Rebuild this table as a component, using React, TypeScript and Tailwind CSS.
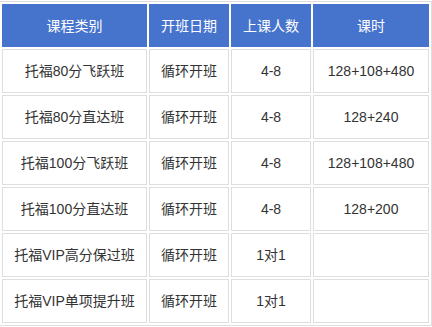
import React from "react";

const rows: [string, string, string, string][] = [
  ["托福80分飞跃班", "循环开班", "4-8", "128+108+480"],
  ["托福80分直达班", "循环开班", "4-8", "128+240"],
  ["托福100分飞跃班", "循环开班", "4-8", "128+108+480"],
  ["托福100分直达班", "循环开班", "4-8", "128+200"],
  ["托福VIP高分保过班", "循环开班", "1对1", ""],
  ["托福VIP单项提升班", "循环开班", "1对1", ""],
];

const headers = ["课程类别", "开班日期", "上课人数", "课时"];

export default function App() {
  return (
    <div className="w-[432px] h-[327px] bg-white pt-px overflow-hidden">
      <table
        className="table-fixed border-separate border-spacing-[2px] border border-[#dedede] w-[433px] -ml-px text-[14px] text-[#333]"
        style={{ fontFamily: '"Liberation Sans", Arial, "Noto Sans CJK SC", sans-serif' }}
      >
        <colgroup>
          <col className="w-[145px]" />
          <col className="w-[80px]" />
          <col className="w-[80px]" />
          <col className="w-[116px]" />
        </colgroup>
        <thead>
          <tr>
            {headers.map((h) => (
              <th
                key={h}
                className="h-[43px] p-0 pt-px bg-[#4673cc] border border-[#4673cc] text-white font-normal text-center align-middle"
              >
                {h}
              </th>
            ))}
          </tr>
        </thead>
        <tbody>
          {rows.map((r, i) => (
            <tr key={i}>
              {r.map((c, j) => (
                <td
                  key={j}
                  className="h-[44px] p-0 pt-px border border-[#dedede] text-center align-middle"
                >
                  {c}
                </td>
              ))}
            </tr>
          ))}
        </tbody>
      </table>
    </div>
  );
}
